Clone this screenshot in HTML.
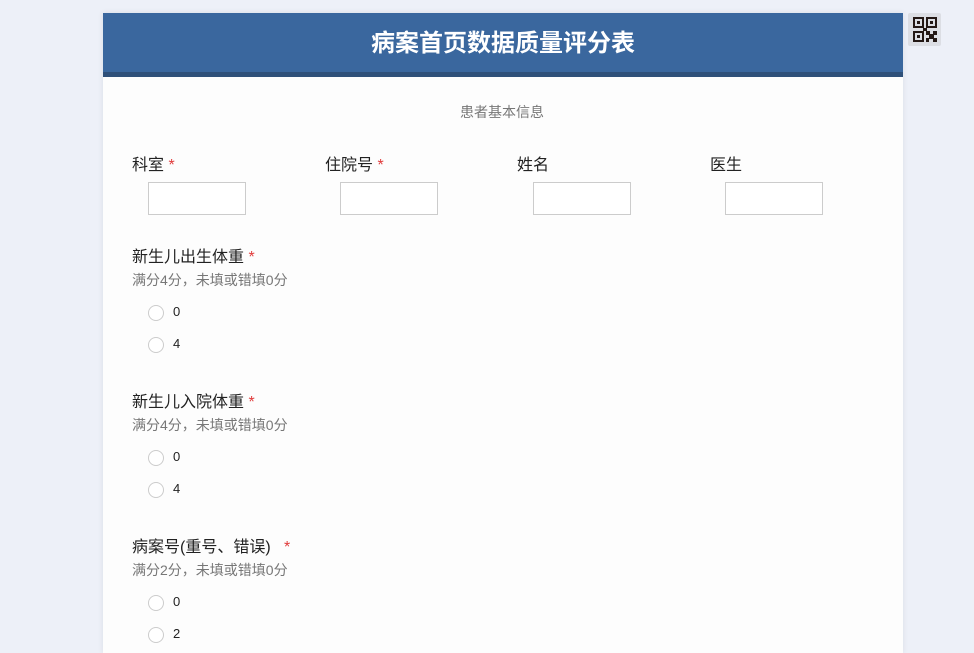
<!DOCTYPE html>
<html><head><meta charset="utf-8"><style>
body{margin:0;width:974px;height:645px;background:#edf0f8;overflow:hidden;font-family:"Liberation Sans","Noto Sans CJK SC",sans-serif;position:relative}
.card{position:absolute;left:103px;top:13px;width:800px;height:640px;background:#fdfdfd;box-shadow:0 0 6px rgba(0,0,0,.08)}
.hd{height:59px;background:#3a679e;color:#fff;font-weight:bold;font-size:24px;text-align:center;line-height:62px;border-bottom:5px solid #2f5079}
.a{position:absolute;color:#222;font-size:16px;white-space:nowrap}
.s{color:#e03a3a}
.sub{position:absolute;color:#777;font-size:14px;white-space:nowrap}
.in{position:absolute;width:96px;height:31px;border:1px solid #ccc;background:#fff}
.r{position:absolute;width:14px;height:14px;border:1px solid #ccc;border-radius:50%;background:#fff}
.v{position:absolute;font-size:13px;color:#222}
.qr{position:absolute;left:908px;top:13px;width:33px;height:33px;background:#dcdee4;border-radius:2px}
</style></head><body>
<div class="card"><div class="hd">病案首页数据质量评分表</div>
<div class="sub" style="left:357px;top:89px">患者基本信息</div>
<div class="a" style="left:29px;top:138px">科室 <span class="s">*</span></div>
<div class="a" style="left:222px;top:138px">住院号 <span class="s">*</span></div>
<div class="a" style="left:414px;top:138px">姓名</div>
<div class="a" style="left:607px;top:138px">医生</div>
<div class="in" style="left:45px;top:169px"></div>
<div class="in" style="left:237px;top:169px"></div>
<div class="in" style="left:430px;top:169px"></div>
<div class="in" style="left:622px;top:169px"></div>

<div class="a" style="left:29px;top:230px">新生儿出生体重 <span class="s">*</span></div>
<div class="sub" style="left:29px;top:257px">满分4分，未填或错填0分</div>
<div class="r" style="left:45px;top:292px"></div><div class="v" style="left:70px;top:291px">0</div>
<div class="r" style="left:45px;top:324px"></div><div class="v" style="left:70px;top:323px">4</div>

<div class="a" style="left:29px;top:375px">新生儿入院体重 <span class="s">*</span></div>
<div class="sub" style="left:29px;top:402px">满分4分，未填或错填0分</div>
<div class="r" style="left:45px;top:437px"></div><div class="v" style="left:70px;top:436px">0</div>
<div class="r" style="left:45px;top:469px"></div><div class="v" style="left:70px;top:468px">4</div>

<div class="a" style="left:29px;top:520px">病案号(重号、错误) &nbsp; <span class="s">*</span></div>
<div class="sub" style="left:29px;top:547px">满分2分，未填或错填0分</div>
<div class="r" style="left:45px;top:582px"></div><div class="v" style="left:70px;top:581px">0</div>
<div class="r" style="left:45px;top:614px"></div><div class="v" style="left:70px;top:613px">2</div>
</div>
<div class="qr"><svg width="33" height="33" viewBox="0 0 33 33">
<g fill="#231815">
<rect x="5" y="4" width="11" height="11"/><rect x="18" y="4" width="11" height="11"/><rect x="5" y="18" width="11" height="11"/>
<rect x="18" y="18" width="4" height="4"/><rect x="25" y="18" width="4" height="4"/><rect x="21" y="21" width="5" height="5"/><rect x="18" y="25" width="3" height="4"/><rect x="25" y="25" width="4" height="4"/><rect x="15" y="15" width="4" height="3"/></g>
<g fill="#dcdee4"><rect x="7" y="6" width="7" height="7"/><rect x="20" y="6" width="7" height="7"/><rect x="7" y="20" width="7" height="7"/></g>
<g fill="#231815"><rect x="9" y="8" width="3" height="3"/><rect x="22" y="8" width="3" height="3"/><rect x="9" y="22" width="3" height="3"/></g>
</svg></div>
</body></html>
